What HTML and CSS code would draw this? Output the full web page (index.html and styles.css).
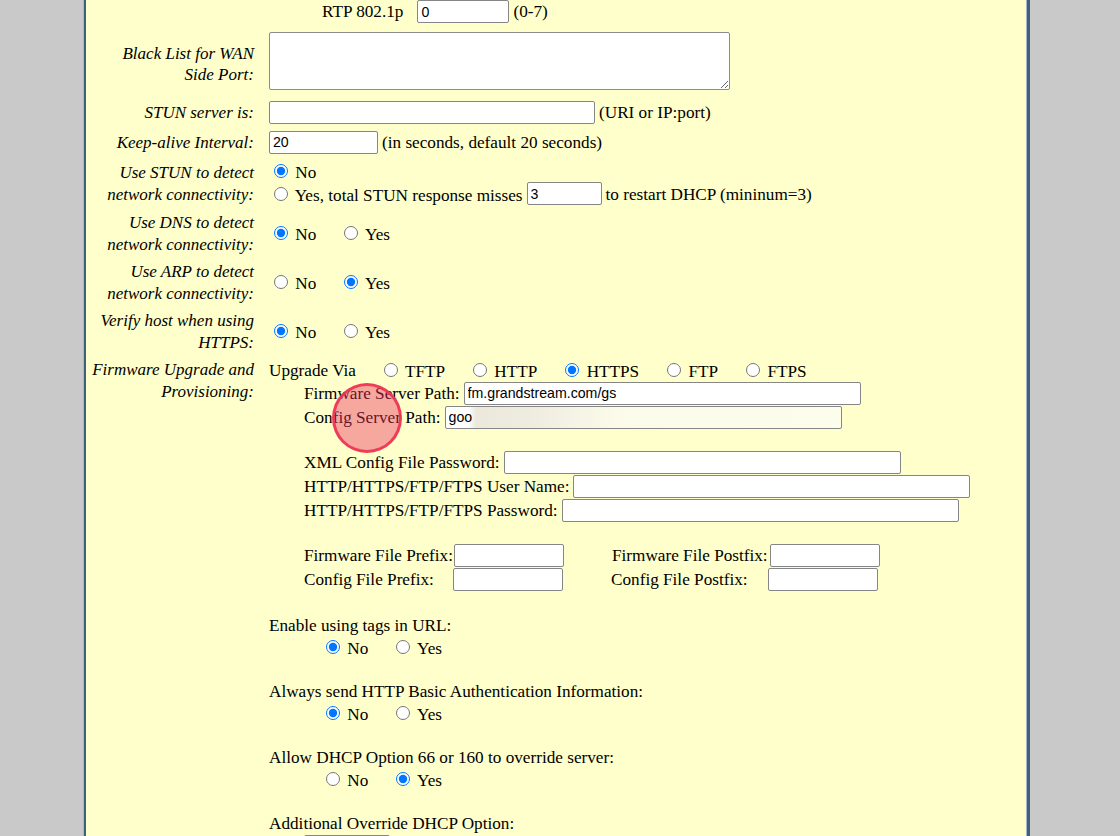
FILE: index.html
```html
<!DOCTYPE html>
<html>
<head>
<meta charset="utf-8">
<title>Advanced Settings</title>
<link rel="stylesheet" href="styles.css">
</head>
<body>
<div class="page">
  <div class="row r-rtp">
    <div class="label"></div>
    <div class="value">
      <div class="line l-rtp"><span>RTP 802.1p</span><input class="txt w-rtp gap-l" type="text" value="0"><span class="after">(0-7)</span></div>
    </div>
  </div>

  <div class="row r-black">
    <div class="label lh21">Black List for WAN<br>Side Port:</div>
    <div class="value"><textarea class="area"></textarea></div>
  </div>

  <div class="row r-30">
    <div class="label">STUN server is:</div>
    <div class="value"><div class="line l-in"><input class="txt w-stun" type="text"><span class="after">(URI or IP:port)</span></div></div>
  </div>

  <div class="row r-30">
    <div class="label">Keep-alive Interval:</div>
    <div class="value"><div class="line l-in"><input class="txt w-keep" type="text" value="20"><span class="after">(in seconds, default 20 seconds)</span></div></div>
  </div>

  <div class="row r-51">
    <div class="label">Use STUN to detect<br>network connectivity:</div>
    <div class="value">
      <div class="line"><label class="opt"><input type="radio" name="stun" checked> No</label></div>
      <div class="line l-in"><label class="opt"><input type="radio" name="stun"> Yes, total STUN response misses</label><input class="txt w-miss gap-s" type="text" value="3"><span class="after">to restart DHCP (mininum=3)</span></div>
    </div>
  </div>

  <div class="row r-49">
    <div class="label">Use DNS to detect<br>network connectivity:</div>
    <div class="value"><div class="line"><label class="opt"><input type="radio" name="dns" checked> No</label><label class="opt"><input type="radio" name="dns"> Yes</label></div></div>
  </div>

  <div class="row r-49">
    <div class="label">Use ARP to detect<br>network connectivity:</div>
    <div class="value"><div class="line"><label class="opt"><input type="radio" name="arp"> No</label><label class="opt"><input type="radio" name="arp" checked> Yes</label></div></div>
  </div>

  <div class="row r-49">
    <div class="label">Verify host when using<br>HTTPS:</div>
    <div class="value"><div class="line"><label class="opt"><input type="radio" name="vh" checked> No</label><label class="opt"><input type="radio" name="vh"> Yes</label></div></div>
  </div>

  <div class="row r-fw">
    <div class="label">Firmware Upgrade and<br>Provisioning:</div>
    <div class="value">
      <div class="line l-via"><span>Upgrade Via</span><label class="opt"><input type="radio" name="via"> TFTP</label><label class="opt"><input type="radio" name="via"> HTTP</label><label class="opt"><input type="radio" name="via" checked> HTTPS</label><label class="opt"><input type="radio" name="via"> FTP</label><label class="opt"><input type="radio" name="via"> FTPS</label></div>
      <div class="line l-in sub"><span>Firmware Server Path:</span><input class="txt w-path gap-s" type="text" value="fm.grandstream.com/gs"></div>
      <div class="line l-in sub"><span>Config Server Path:</span><input class="txt w-path gap-s blurred" type="text" value="goo"></div>
      <div class="blank b21"></div>
      <div class="line l-in sub"><span>XML Config File Password:</span><input class="txt w-path gap-s" type="password"></div>
      <div class="line l-in sub"><span>HTTP/HTTPS/FTP/FTPS User Name:</span><input class="txt w-path gap-s" type="text"></div>
      <div class="line l-in sub"><span>HTTP/HTTPS/FTP/FTPS Password:</span><input class="txt w-path gap-s" type="password"></div>
      <div class="blank b21"></div>
      <div class="line l-in sub"><span class="fix-a">Firmware File Prefix:</span><input class="txt w-short" type="text"><span class="fix-b">Firmware File Postfix:</span><input class="txt w-short" type="text"></div>
      <div class="line l-in sub"><span class="fix-a fa2">Config File Prefix:</span><input class="txt w-short" type="text"><span class="fix-b fb2">Config File Postfix:</span><input class="txt w-short" type="text"></div>
      <div class="blank b23"></div>
      <div class="line"><span>Enable using tags in URL:</span></div>
      <div class="line opts-ind"><label class="opt"><input type="radio" name="tags" checked> No</label><label class="opt"><input type="radio" name="tags"> Yes</label></div>
      <div class="blank b22"></div>
      <div class="line"><span>Always send HTTP Basic Authentication Information:</span></div>
      <div class="line opts-ind"><label class="opt"><input type="radio" name="auth" checked> No</label><label class="opt"><input type="radio" name="auth"> Yes</label></div>
      <div class="blank b22"></div>
      <div class="line"><span>Allow DHCP Option 66 or 160 to override server:</span></div>
      <div class="line opts-ind"><label class="opt"><input type="radio" name="dhcp"> No</label><label class="opt"><input type="radio" name="dhcp" checked> Yes</label></div>
      <div class="blank b22"></div>
      <div class="line"><span>Additional Override DHCP Option:</span></div>
      <div class="line l-sel sub"><select class="sel"><option>None</option></select></div>
    </div>
  </div>
</div>
<div class="click-mark"></div>
</body>
</html>
```

FILE: styles.css
```css
html {
  overflow: hidden;
}

body {
  margin: 0;
  background: #c9c9c9;
  font-family: "Liberation Serif", "Times New Roman", serif;
  font-size: 17.2px;
  color: #000;
}

.page {
  margin-left: 84px;
  width: 946px;
  box-sizing: border-box;
  min-height: 900px;
  background: #ffffcc;
  border-left: 2px solid #41607e;
  border-right: 3px solid #41607e;
  box-shadow: -1px 0 0 #a6b6c9, inset -1px 0 0 #a6b6c9;
}

.row {
  display: flex;
  align-items: center;
}

.r-rtp { height: 26px; align-items: flex-start; }
.r-black { height: 71px; align-items: flex-start; }
.r-30 { height: 30px; }
.r-51 { height: 51px; }
.r-49 { height: 49px; }
.r-fw { align-items: flex-start; padding-top: 3px; }

.label {
  flex: none;
  width: 168px;
  padding-right: 8px;
  padding-top: 2px;
  text-align: right;
  font-style: italic;
  font-size: 17px;
  line-height: 22px;
  white-space: nowrap;
}

.r-fw .label { padding-top: 1px; }
.r-rtp .label { padding-top: 0; }

.label.lh21 {
  line-height: 21px;
  padding-top: 17px;
}

.value {
  flex: 1;
  padding-left: 7px;
  line-height: 20px;
}

.r-black .value { padding-top: 6px; }

.line {
  display: flex;
  align-items: center;
  height: 22px;
  white-space: nowrap;
}

.line > span,
.line > .opt {
  padding-top: 2px;
}

.l-rtp > span { padding-top: 0; }

.l-in { height: 24px; }
.l-rtp { height: 23px; padding-left: 53px; }
.l-via { height: 23px; }
.l-sel { height: 24px; align-items: flex-start; padding-top: 1px; }

.sub { padding-left: 35px; }
.opts-ind { padding-left: 52px; }

.blank.b21 { height: 21px; }
.blank.b22 { height: 22px; }
.blank.b23 { height: 23px; }

.opt { white-space: nowrap; }
.opt + .opt,
.l-via span + .opt { margin-left: 23px; }

input[type="radio"] {
  width: 14px;
  height: 14px;
  margin: 3px 3px 0 5px;
}

.txt {
  height: 23px;
  box-sizing: border-box;
  margin: 0;
  padding: 0 3px;
  border: 1px solid #868686;
  border-radius: 2px;
  background: #fff;
  font-family: "Liberation Sans", Arial, sans-serif;
  font-size: 14.17px;
  color: #000;
}

.gap-l { margin-left: 14px; }
.gap-s { margin-left: 4px; }
.after { margin-left: 4px; }

.w-rtp { width: 92px; }
.w-stun { width: 326px; }
.w-keep { width: 109px; }
.w-miss { width: 75px; }
.w-path { width: 397px; }
.w-short { width: 110px; }

.fix-a { width: 150px; flex: none; }
.fix-b { width: 158px; flex: none; margin-left: 48px; }
.fix-a.fa2 { width: 149px; }
.fix-b.fb2 { width: 157px; }

.blurred {
  background: linear-gradient(90deg, #ffffff 0, #ffffff 22px, #ece9dc 30px, #eeebdf 80px, #f5f3e5 125px, #fbfbe9 170px, #fdfdec 100%);
}

.area {
  display: block;
  width: 461px;
  height: 58px;
  box-sizing: border-box;
  margin: 0;
  border: 1px solid #8c8c8c;
  border-radius: 2px;
  background: #fff;
}

.sel {
  width: 86px;
  height: 23px;
  margin: 0;
  border: 1px solid #868686;
  border-radius: 2px;
  background: #fff;
  font-family: "Liberation Sans", Arial, sans-serif;
  font-size: 14.17px;
}

.click-mark {
  position: absolute;
  left: 332px;
  top: 383px;
  width: 64px;
  height: 64px;
  border: 3px solid rgba(238, 52, 82, 0.92);
  border-radius: 50%;
  background: rgba(236, 48, 96, 0.42);
}
```
